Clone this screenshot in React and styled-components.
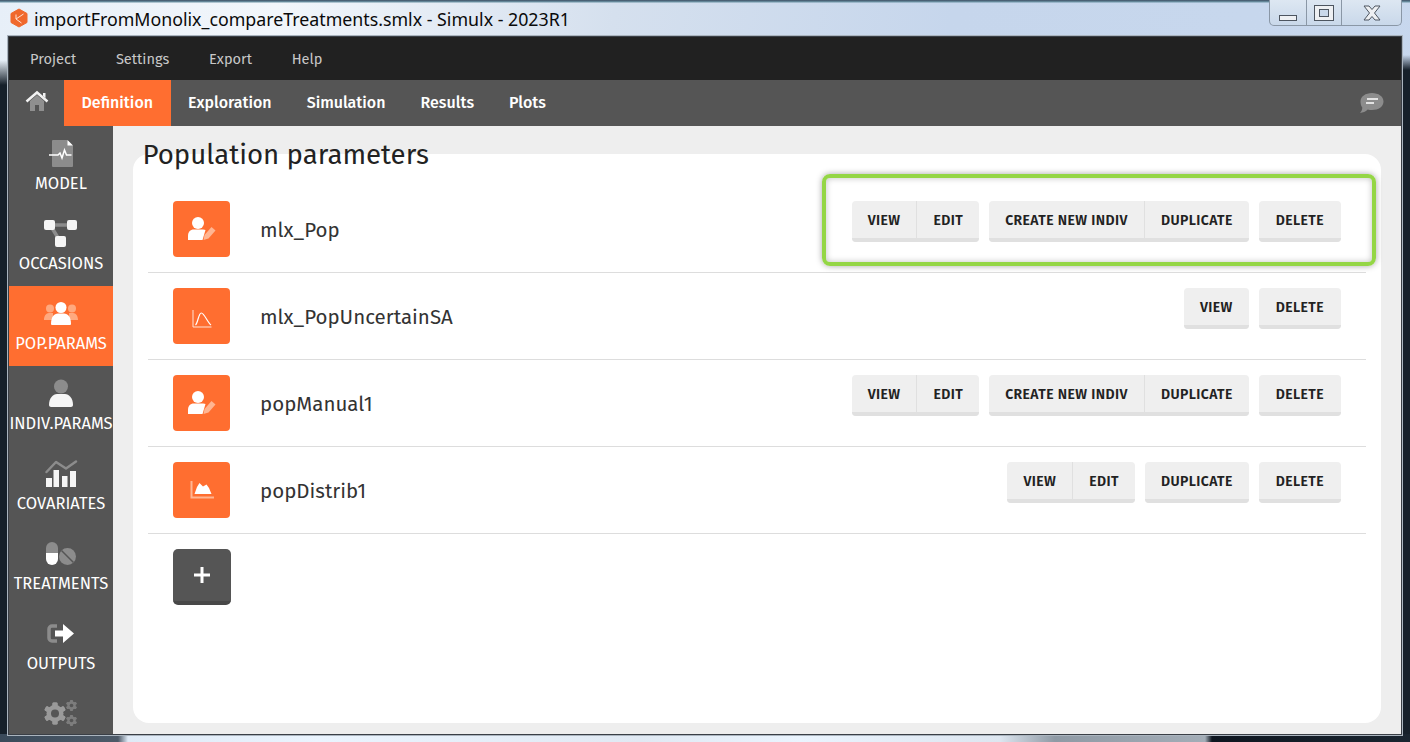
import styled, { createGlobalStyle } from 'styled-components';

const GlobalStyle = createGlobalStyle`
    html, body {
        margin: 0;
        padding: 0;
        height: 100%;
        overflow: hidden;
    }
    * {
        box-sizing: border-box;
    }
    body {
        font-family: "Fira Sans", "Noto Sans", "Open Sans", sans-serif;
    }
`;

const sideItems = [
    { label: 'MODEL', icon: <ModelIcon /> },
    { label: 'OCCASIONS', icon: <OccasionsIcon /> },
    { label: 'POP.PARAMS', icon: <PopIcon />, active: true },
    { label: 'INDIV.PARAMS', icon: <IndivIcon /> },
    { label: 'COVARIATES', icon: <CovariatesIcon /> },
    { label: 'TREATMENTS', icon: <TreatmentsIcon /> },
    { label: 'OUTPUTS', icon: <OutputsIcon /> },
    { label: '', icon: <GearsIcon /> },
];

const rows = [
    { name: 'mlx_Pop', icon: <UserEditIcon />, groups: [['VIEW', 'EDIT'], ['CREATE NEW INDIV', 'DUPLICATE'], ['DELETE']] },
    { name: 'mlx_PopUncertainSA', icon: <CurveIcon />, groups: [['VIEW'], ['DELETE']] },
    { name: 'popManual1', icon: <UserEditIcon />, groups: [['VIEW', 'EDIT'], ['CREATE NEW INDIV', 'DUPLICATE'], ['DELETE']] },
    { name: 'popDistrib1', icon: <AreaIcon />, groups: [['VIEW', 'EDIT'], ['DUPLICATE'], ['DELETE']] },
];

export default function App() {
    return (
        <Window>
            <GlobalStyle />
            <TitleBar>
                <LogoSlot><AppLogo /></LogoSlot>
                <WindowTitle>importFromMonolix_compareTreatments.smlx - Simulx - 2023R1</WindowTitle>
                <WindowControls>
                    <ControlButton $w={36}><MinGlyph /></ControlButton>
                    <ControlButton $w={35}><MaxGlyph /></ControlButton>
                    <ControlButton $w={60}><CloseGlyph /></ControlButton>
                </WindowControls>
            </TitleBar>
            <AppArea>
                <MenuBar>
                    <MenuItem>Project</MenuItem>
                    <MenuItem>Settings</MenuItem>
                    <MenuItem>Export</MenuItem>
                    <MenuItem>Help</MenuItem>
                </MenuBar>
                <TabBar>
                    <HomeTab><HomeIcon /></HomeTab>
                    <Tab $active>Definition</Tab>
                    <Tab>Exploration</Tab>
                    <Tab>Simulation</Tab>
                    <Tab>Results</Tab>
                    <Tab>Plots</Tab>
                    <ChatSlot><ChatIcon /></ChatSlot>
                </TabBar>
                <Body>
                    <Sidebar>
                        {sideItems.map((item, i) => (
                            <SideItem key={i} $active={item.active}>
                                <SideIcon>{item.icon}</SideIcon>
                                {item.label && <SideLabel>{item.label}</SideLabel>}
                            </SideItem>
                        ))}
                    </Sidebar>
                    <Content>
                        <PageTitle>Population parameters</PageTitle>
                        <Card>
                            {rows.map((row, i) => (
                                <Row key={row.name}>
                                    <RowIcon>{row.icon}</RowIcon>
                                    <RowName>{row.name}</RowName>
                                    <Actions>
                                        {row.groups.map((group, j) => (
                                            <ButtonGroup key={j}>
                                                {group.map((b) => (
                                                    <ActionButton key={b} $pad={b === 'DELETE' ? 17 : 16}>{b}</ActionButton>
                                                ))}
                                            </ButtonGroup>
                                        ))}
                                    </Actions>
                                    {i === 0 && <Highlight />}
                                </Row>
                            ))}
                            <AddButton>
                                <svg width="18" height="18" viewBox="0 0 18 18">
                                    <path d="M9 1v16M1 9h16" stroke="#fff" strokeWidth="3" />
                                </svg>
                            </AddButton>
                        </Card>
                    </Content>
                </Body>
            </AppArea>
        </Window>
    );
}

function AppLogo() {
    return (
        <svg width="20" height="20" viewBox="0 0 20 20">
            <path d="M10 1l8 4.500v9L10 19l-8-4.500v-9z" fill="#f0682c" stroke="#f0682c" strokeLinejoin="round" />
            <path d="M14.500 6L7 11l5.500 4M7 6.500V11" stroke="#ffe3d4" strokeWidth="1" fill="none" />
        </svg>
    );
}

function MinGlyph() {
    return <GlyphBox $w={18} $h={6} />;
}

function MaxGlyph() {
    return (
        <GlyphBox $w={20} $h={16}>
            <InnerGlyph />
        </GlyphBox>
    );
}

function CloseGlyph() {
    return (
        <svg width="20" height="16" viewBox="0 0 20 16">
            <path d="M2 1h5l3 3.500L13 1h5l-5.500 7 5.500 7h-5l-3-3.500L7 15H2l5.500-7z" fill="#eef0f3" stroke="#4d5560" strokeWidth="1" />
        </svg>
    );
}

function HomeIcon() {
    return (
        <svg width="24" height="22" viewBox="0 0 24 22">
            <path d="M5 11l7-6 7 6v10h-5v-6h-4v6H5z" fill="#8f8f8f" />
            <path d="M1.500 11.500L12 2.500l10.500 9" stroke="#f2f2f2" strokeWidth="2.500" fill="none" />
            <path d="M18 3h2.500v5L18 6z" fill="#f2f2f2" />
        </svg>
    );
}

function ChatIcon() {
    return (
        <svg width="26" height="22" viewBox="0 0 26 22">
            <path d="M13 1c6.500 0 11.500 3.500 11.500 8.500S19.500 18 13 18c-1.500 0-3-.2-4.300-.6C6.500 19.500 4 20.500 1 21c1.500-1.500 2.300-3.300 2.300-5.500C2 14 1.500 11.500 1.500 9.500 1.500 4.500 6.500 1 13 1z" fill="#8c8c8c" />
            <path d="M8 7h11M7 11h8" stroke="#fff" strokeWidth="1.600" />
        </svg>
    );
}

function ModelIcon() {
    return (
        <svg width="36" height="30" viewBox="0 0 36 30">
            <path d="M9 3a1 1 0 011-1h14l6 6v20a1 1 0 01-1 1H10a1 1 0 01-1-1z" fill="#8c8c8c" />
            <path d="M24.500 2l5.500 5.500h-5.500z" fill="#fff" />
            <path d="M6 17h9l2-2 2 5 2.500-8 2 5h5" stroke="#fff" strokeWidth="1.500" fill="none" />
        </svg>
    );
}

function OccasionsIcon() {
    return (
        <svg width="36" height="30" viewBox="0 0 36 30">
            <path d="M8 7h20M9 10l8 13" stroke="#8c8c8c" strokeWidth="3.500" />
            <rect x="1" y="2" width="11" height="10" rx="2" fill="#f5f5f5" />
            <rect x="24" y="2" width="10" height="10" rx="2" fill="#f5f5f5" />
            <rect x="12" y="18" width="11" height="11" rx="2" fill="#f5f5f5" />
        </svg>
    );
}

function PopIcon() {
    return (
        <svg width="36" height="30" viewBox="0 0 36 30">
            <g fill="#ffa97f">
                <circle cx="7" cy="10.500" r="4" />
                <circle cx="29" cy="10.500" r="4" />
                <path d="M1 22c0-4 2-7 5-7h4v7zM35 22c0-4-2-7-5-7h-4v7z" />
            </g>
            <circle cx="18" cy="9.500" r="5.500" fill="#fff" />
            <path d="M8 26c0-7 3-10.500 7-10.500h6c4 0 7 3.500 7 10.500a1 1 0 01-1 1H9a1 1 0 01-1-1z" fill="#fff" />
        </svg>
    );
}

function IndivIcon() {
    return (
        <svg width="36" height="30" viewBox="0 0 36 30">
            <circle cx="18" cy="8.500" r="7" fill="#8c8c8c" />
            <path d="M6 27c0-7 4-11 8-11h8c4 0 8 4 8 11 0 1-1 2-2 2H8c-1 0-2-1-2-2z" fill="#f5f5f5" />
        </svg>
    );
}

function CovariatesIcon() {
    return (
        <svg width="36" height="30" viewBox="0 0 36 30">
            <path d="M3.500 14L13 4l10 6.500L33 3.500" stroke="#8c8c8c" strokeWidth="2.500" fill="none" strokeLinejoin="round" strokeLinecap="round" />
            <g fill="#f5f5f5">
                <rect x="3" y="20" width="6" height="9" />
                <rect x="10.500" y="12" width="5.500" height="17" />
                <rect x="19" y="18" width="5.500" height="11" />
                <rect x="27" y="13" width="6" height="16" />
            </g>
        </svg>
    );
}

function TreatmentsIcon() {
    return (
        <svg width="36" height="30" viewBox="0 0 36 30">
            <path d="M3 15v-5a6 6 0 0112 0v5z" fill="#8c8c8c" />
            <path d="M3 15h12v6a6 6 0 01-12 0z" fill="#fff" />
            <circle cx="24.500" cy="18.500" r="8.500" fill="#8c8c8c" />
            <path d="M18.500 12.500l12 12" stroke="#555" strokeWidth="1.500" />
        </svg>
    );
}

function OutputsIcon() {
    return (
        <svg width="36" height="30" viewBox="0 0 36 30">
            <path d="M14 8H9a3 3 0 00-3 3v9a3 3 0 003 3h5" stroke="#8c8c8c" strokeWidth="3.500" fill="none" />
            <path d="M12 12.500h8V6l11 9.500L20 25v-6.500h-8z" fill="#fff" />
        </svg>
    );
}

function Gear({ cx, cy, r, fill, hole }) {
    const teeth = [0, 60, 120, 180, 240, 300];
    return (
        <g fill={fill}>
            {teeth.map((a) => (
                <rect
                    key={a}
                    x={cx - r * 0.3}
                    y={cy - r * 1.3}
                    width={r * 0.6}
                    height={r * 2.6}
                    rx={r * 0.15}
                    transform={`rotate(${a} ${cx} ${cy})`}
                />
            ))}
            <circle cx={cx} cy={cy} r={r} />
            <circle cx={cx} cy={cy} r={hole} fill="#555" />
        </g>
    );
}

function GearsIcon() {
    return (
        <svg width="36" height="30" viewBox="0 0 36 30">
            <Gear cx={12} cy={15.500} r={8.500} fill="#9a9a9a" hole={4} />
            <Gear cx={28.500} cy={7.500} r={4.200} fill="#7d7d7d" hole={1.800} />
            <Gear cx={28.500} cy={22.500} r={4.200} fill="#7d7d7d" hole={1.800} />
        </svg>
    );
}

function UserEditIcon() {
    return (
        <svg width="30" height="26" viewBox="0 0 30 26">
            <circle cx="11" cy="7" r="6" fill="#fff" />
            <path d="M1 24v-4c0-4 2-6.500 6-6.500h9c1 0 2 .2 2.500.5L15.500 24z" fill="#fff" />
            <path d="M16.500 24l1-5 7-8 4 3.500-7 8z" fill="#ffb592" />
        </svg>
    );
}

function CurveIcon() {
    return (
        <svg width="22" height="24" viewBox="0 0 22 24">
            <path d="M2 6v17h18.500" stroke="#ffe2d4" strokeWidth="1" fill="none" />
            <path d="M4.500 21c2.500-2 3-12 5.800-12S17 19 20 21" stroke="#fff" strokeWidth="1.200" fill="none" />
        </svg>
    );
}

function AreaIcon() {
    return (
        <svg width="24" height="20" viewBox="0 0 24 20">
            <path d="M1.500 1v16.500H24" stroke="#ffb592" strokeWidth="2" fill="none" />
            <path d="M4.500 14L7 7l2.500-4L13 6.500l3.500-2L19 8l2.500 6z" fill="#fff" />
        </svg>
    );
}

const Window = styled.div`
    width: 1410px;
    height: 742px;
    display: flex;
    flex-direction: column;
    padding: 0 9px 8px;
    overflow: hidden;
    background:
        linear-gradient(180deg, #3d4f63 0, #6f97a8 2px, transparent 3px) top / 100% 3px no-repeat,
        linear-gradient(90deg, #3a4a5a 0, #4d5a68 118px, #dfeaf6 128px, #eaf4fe 320px, #e0e9f3 640px, #eaf4fe 800px, #dde6f0 1000px, #8f9aa5 1055px, #a3adb7 1205px, #0e1620 1212px, #1a2530 100%) bottom / 100% 8px no-repeat,
        linear-gradient(180deg, transparent 0, transparent 60px, #16202a 85px) left / 9px 100% no-repeat,
        linear-gradient(180deg, transparent 0, transparent 55px, #16202a 70px) right / 9px 100% no-repeat,
        linear-gradient(100deg, #e7eff8 0, #f2f6fb 18%, #d5e0ee 40%, #c6d6ec 62%, #c8d8ee 100%);
`;

const TitleBar = styled.div`
    height: 37px;
    flex-shrink: 0;
    display: flex;
    align-items: flex-start;
    border-bottom: 1px solid #e8eef5;
`;

const LogoSlot = styled.div`
    margin-top: 8px;
    height: 20px;
    flex-shrink: 0;
`;

const WindowTitle = styled.div`
    font-family: "Noto Sans", sans-serif;
    font-size: 17.800px;
    line-height: 22px;
    margin: 8px 0 0 5px;
    color: #0a0a0a;
    white-space: nowrap;
`;

const WindowControls = styled.div`
    margin-left: auto;
    margin-right: -1px;
    height: 26px;
    display: flex;
    border: 1px solid #8a97a6;
    border-top: none;
    border-radius: 0 0 5px 5px;
    background: linear-gradient(180deg, #dde7f2, #c9d8ea);
`;

const ControlButton = styled.div`
    width: ${(p) => p.$w}px;
    display: flex;
    align-items: center;
    justify-content: center;
    & + & {
        border-left: 1px solid #8a97a6;
    }
`;

const GlyphBox = styled.div`
    width: ${(p) => p.$w}px;
    height: ${(p) => p.$h}px;
    margin-top: ${(p) => (p.$h < 10 ? 11 : 0)}px;
    border: 1px solid #4d5560;
    background: #eef0f3;
    display: flex;
    align-items: center;
    justify-content: center;
`;

const InnerGlyph = styled.div`
    width: 10px;
    height: 8px;
    border: 1px solid #4d5560;
    background: #c9d8ea;
`;

const AppArea = styled.div`
    flex: 1;
    min-height: 0;
    display: flex;
    flex-direction: column;
    box-shadow: 0 0 0 1px #3a3f46, 0 0 0 2px #aab4be;
`;

const MenuBar = styled.div`
    height: 43px;
    flex-shrink: 0;
    background: #212121;
    display: flex;
    align-items: center;
    padding-left: 21px;
    gap: 39.700px;
`;

const MenuItem = styled.span`
    font-size: 14.600px;
    color: #c8c8c8;
`;

const TabBar = styled.div`
    height: 46px;
    flex-shrink: 0;
    background: #555555;
    display: flex;
`;

const HomeTab = styled.div`
    width: 55px;
    display: flex;
    align-items: center;
    justify-content: center;
    padding-bottom: 4px;
`;

const Tab = styled.div`
    padding: 0 17.500px 2px;
    display: flex;
    align-items: center;
    font-size: 16px;
    font-weight: 500;
    color: #fff;
    background: ${(p) => (p.$active ? '#ff6e30' : 'transparent')};
`;

const ChatSlot = styled.div`
    margin-left: auto;
    margin-right: 16px;
    display: flex;
    align-items: center;
`;

const Body = styled.div`
    flex: 1;
    min-height: 0;
    display: flex;
`;

const Sidebar = styled.div`
    width: 104px;
    flex-shrink: 0;
    background: #555555;
    overflow: hidden;
`;

const SideItem = styled.div`
    height: 80px;
    display: flex;
    flex-direction: column;
    align-items: center;
    padding-top: 12px;
    background: ${(p) => (p.$active ? '#ff6e30' : 'transparent')};
`;

const SideIcon = styled.div`
    height: 30px;
    display: flex;
    align-items: center;
    justify-content: center;
`;

const SideLabel = styled.div`
    margin-top: 5px;
    font-size: 16.500px;
    line-height: 22px;
    color: #fff;
    white-space: nowrap;
`;

const Content = styled.div`
    flex: 1;
    min-width: 0;
    display: flex;
    flex-direction: column;
    background: #eeeeee;
    padding: 13px 20px 11px;
`;

const PageTitle = styled.h1`
    margin: 0 0 -17px 9.500px;
    font-size: 27.600px;
    font-weight: 400;
    line-height: 32px;
    color: #222;
    position: relative;
`;

const Card = styled.div`
    flex: 1;
    background: #fff;
    border-radius: 16px;
    padding: 32px 15px 0;
`;

const Row = styled.div`
    position: relative;
    height: 87px;
    display: flex;
    align-items: center;
    padding: 0 25px;
    border-bottom: 1px solid #ddd;
`;

const RowIcon = styled.div`
    width: 57px;
    height: 56px;
    border-radius: 4px;
    background: #ff6e30;
    display: flex;
    align-items: center;
    justify-content: center;
`;

const RowName = styled.div`
    margin: 2px 0 0 30px;
    font-size: 20.500px;
    color: #333;
`;

const Actions = styled.div`
    margin-left: auto;
    align-self: flex-start;
    margin-top: 15px;
    display: flex;
    gap: 10px;
`;

const ButtonGroup = styled.div`
    display: flex;
    border-radius: 4px;
    overflow: hidden;
`;

const ActionButton = styled.div`
    height: 41px;
    padding: 1px ${(p) => p.$pad}px 0;
    display: flex;
    align-items: center;
    font-size: 14px;
    letter-spacing: 0.400px;
    font-weight: 600;
    color: #222;
    background: #efefef;
    border-bottom: 4px solid #e0e0e0;
    & + & {
        border-left: 1px solid #e0e0e0;
    }
`;

const Highlight = styled.div`
    position: absolute;
    left: 674px;
    top: -12px;
    width: 554px;
    height: 92px;
    border: 4px solid #94d645;
    border-radius: 8px;
    box-shadow: 0 0 6px rgba(0, 0, 0, 0.35), inset 0 0 6px rgba(0, 0, 0, 0.25);
    pointer-events: none;
`;

const AddButton = styled.div`
    width: 58px;
    height: 56px;
    margin: 15px 0 0 25px;
    border-radius: 5px;
    background: #555555;
    border-bottom: 4px solid #484848;
    display: flex;
    align-items: center;
    justify-content: center;
`;
